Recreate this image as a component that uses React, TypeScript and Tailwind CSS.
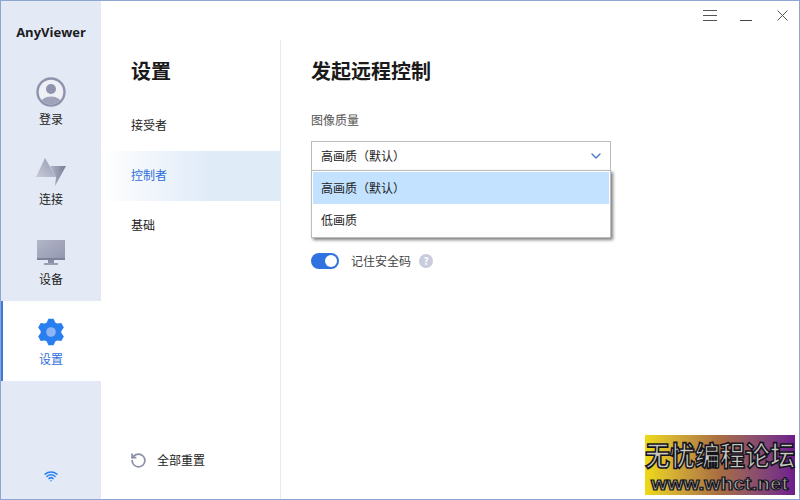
import { ChevronDown, RotateCcw, Wifi } from "lucide-react";

const FONT = "[font-family:'Noto_Sans_CJK_SC','Noto_Sans',sans-serif]";

function gearPath() {
  const pts: string[] = [];
  const pt = (deg: number, r: number) => {
    const a = (deg * Math.PI) / 180;
    return `${(14 + r * Math.cos(a)).toFixed(2)} ${(14 + r * Math.sin(a)).toFixed(2)}`;
  };
  for (let i = 0; i < 6; i++) {
    const base = -90 + 60 * i;
    pts.push(pt(base - 11, 13.6), pt(base + 11, 13.6), pt(base + 24, 10.4), pt(base + 36, 10.4));
  }
  return `M${pts.join(" L")} Z`;
}

function LoginIcon() {
  return (
    <svg width="30" height="30" viewBox="0 0 30 30">
      <defs>
        <clipPath id="login-clip">
          <circle cx="15" cy="15" r="12.5" />
        </clipPath>
      </defs>
      <circle cx="15" cy="15" r="13.5" fill="#eef0f6" stroke="#8f93ad" strokeWidth="2.4" />
      <circle cx="15" cy="12" r="5" fill="#8f93ad" />
      <ellipse cx="15" cy="27" rx="11" ry="7.5" fill="#9fa3ba" clipPath="url(#login-clip)" />
    </svg>
  );
}

function ConnectIcon() {
  return (
    <svg width="30" height="28" viewBox="0 0 30 28">
      <defs>
        <linearGradient id="conn-a" x1="0" y1="1" x2="1" y2="0">
          <stop offset="0" stopColor="#c8cbd9" />
          <stop offset="1" stopColor="#9599b2" />
        </linearGradient>
        <linearGradient id="conn-b" x1="0" y1="0" x2="1" y2="0">
          <stop offset="0" stopColor="#b4b7ca" />
          <stop offset="1" stopColor="#787c94" />
        </linearGradient>
      </defs>
      <path d="M9 0 L0 19 H20 Z" fill="url(#conn-a)" />
      <path d="M14 8 H30 L19 28 L20 19 Z" fill="url(#conn-b)" />
    </svg>
  );
}

function DeviceIcon() {
  return (
    <svg width="28" height="25" viewBox="0 0 28 25">
      <defs>
        <linearGradient id="dev-a" x1="0" y1="0" x2="1" y2="1">
          <stop offset="0" stopColor="#b3b6c8" />
          <stop offset="1" stopColor="#9296ae" />
        </linearGradient>
      </defs>
      <rect x="0" y="0" width="28" height="20" fill="url(#dev-a)" />
      <rect x="0" y="18" width="28" height="2" fill="#7e8299" />
      <rect x="11" y="20" width="6" height="3" fill="#8a8ea6" />
      <rect x="7" y="23" width="14" height="2" fill="#9a9eb4" />
    </svg>
  );
}

function GearIcon() {
  return (
    <svg width="28" height="28" viewBox="0 0 28 28">
      <path d={gearPath()} fill="#2a7ff0" strokeLinejoin="round" />
      <circle cx="14" cy="14" r="4.8" fill="#8fb6f2" />
    </svg>
  );
}

function NavItem({ label, icon, active }: { label: string; icon: React.ReactNode; active?: boolean }) {
  return (
    <div
      className={`relative flex h-20 flex-col items-center justify-start ${
        active ? "bg-white text-[#2f6fd8]" : "text-[#222]"
      }`}
    >
      {active ? <div className="absolute inset-y-0 left-0 w-[2px] bg-[#3f78dc]" /> : null}
      <div className="mt-[15px] flex h-[32px] items-center justify-center">{icon}</div>
      <span className="mt-[2px] text-[12px] leading-[18px]">{label}</span>
    </div>
  );
}

function SubItem({ label, active }: { label: string; active?: boolean }) {
  return (
    <div
      className={`flex h-[50px] items-center pb-[2px] pl-[30px] text-[12px] ${
        active ? "bg-gradient-to-r from-white to-[#e0ebf8] to-60% text-[#2f6fd8]" : "text-[#222]"
      }`}
    >
      {label}
    </div>
  );
}

function Watermark() {
  return (
    <div className="absolute right-[4px] bottom-[4px] flex h-[60px] w-[150px] flex-col items-center bg-gradient-to-r from-[#eeda10] via-[#a86c40] to-[#6e1a8c] [font-family:'Noto_Sans_CJK_SC',sans-serif]">
      <div className="scale-y-[1.08] text-[25px] leading-[39px] font-bold whitespace-nowrap text-[#c8c8c0] [-webkit-text-stroke:1.5px_#14141e]">
        无忧编程论坛
      </div>
      <div className="scale-x-[1.15] font-['Liberation_Sans',sans-serif] text-[18px] leading-[21px] font-bold whitespace-nowrap text-[#a8a8a0] [-webkit-text-stroke:1.2px_#14141e]">
        www.whct.net
      </div>
    </div>
  );
}

export default function App() {
  return (
    <div className={`relative flex h-[500px] w-[800px] overflow-hidden border border-[#8ea6d2] bg-white ${FONT}`}>
      {/* left nav */}
      <aside className="flex w-[100px] shrink-0 flex-col bg-[#e4eaf5]">
        <div className="flex h-[60px] items-center justify-center pt-[4px] font-['Open_Sans',sans-serif] text-[13px] font-bold text-[#1c1c24]">
          AnyViewer
        </div>
        <NavItem label="登录" icon={<LoginIcon />} />
        <NavItem label="连接" icon={<ConnectIcon />} />
        <NavItem label="设备" icon={<DeviceIcon />} />
        <NavItem label="设置" icon={<GearIcon />} active />
        <div className="mt-auto flex justify-center pb-[16px]">
          <Wifi size={14} strokeWidth={2.6} className="text-[#2a7ff0]" />
        </div>
      </aside>

      {/* settings list */}
      <section className="mt-[39px] flex w-[180px] shrink-0 flex-col border-r border-[#e6ebf3]">
        <h2 className="mt-[16px] pl-[30px] text-[20px] leading-[30px] font-bold text-[#1a1a1a]">设置</h2>
        <div className="mt-[15px]">
          <SubItem label="接受者" />
          <SubItem label="控制者" active />
          <SubItem label="基础" />
        </div>
        <div className="mt-auto mb-[30px] flex items-center pl-[29px] text-[12px] leading-[18px] text-[#222]">
          <RotateCcw size={17} strokeWidth={2.4} className="text-[#8a8ea6]" />
          <span className="ml-[10px]">全部重置</span>
        </div>
      </section>

      {/* content */}
      <main className="relative flex-1">
        <div className="flex h-[29px] items-center justify-end pr-[11px]">
          <div className="flex w-[14px] flex-col gap-[4px]">
            <div className="h-px bg-[#555]" />
            <div className="h-px bg-[#555]" />
            <div className="h-px bg-[#555]" />
          </div>
          <div className="mt-[10px] ml-[23px] h-px w-[12px] bg-[#444]" />
          <svg width="11" height="11" viewBox="0 0 11 11" className="ml-[25px]">
            <path d="M0.5 0.5 L10.5 10.5 M10.5 0.5 L0.5 10.5" stroke="#555" strokeWidth="1" />
          </svg>
        </div>
        <div className="pl-[30px]">
          <h1 className="mt-[26px] text-[20px] leading-[30px] font-bold text-[#1a1a1a]">发起远程控制</h1>
          <div className="mt-[25px] text-[12px] leading-[18px] text-[#555]">图像质量</div>
          <div className="relative mt-[12px] w-[300px]">
            <div className="flex h-[30px] items-center justify-between border border-[#bcbcbc] pr-[6px] pl-[9px] text-[12px] text-[#222]">
              <span>高画质（默认）</span>
              <ChevronDown size={16} strokeWidth={2} className="text-[#4a78c8]" />
            </div>
            <div className="absolute top-[29px] left-0 z-10 h-[68px] w-full border border-[#bcbcbc] bg-white p-px text-[12px] text-[#222] shadow-[2px_2px_3px_rgba(0,0,0,0.5)]">
              <div className="flex h-[32px] items-center bg-[#c2e2ff] pl-[8px]">高画质（默认）</div>
              <div className="flex h-[32px] items-center pl-[8px]">低画质</div>
            </div>
          </div>
          <div className="mt-[81px] flex items-center">
            <div className="flex h-[16px] w-[28px] items-center justify-end rounded-full bg-[#2f72e0] pr-[2px]">
              <div className="h-[12px] w-[12px] rounded-full bg-white" />
            </div>
            <span className="ml-[12px] text-[12px] leading-[18px] text-[#444]">记住安全码</span>
            <div className="ml-[8px] flex h-[14px] w-[14px] items-center justify-center rounded-full bg-[#c8ccdc] text-[10px] leading-none font-bold text-white">
              ?
            </div>
          </div>
        </div>
      </main>
      <Watermark />
    </div>
  );
}
